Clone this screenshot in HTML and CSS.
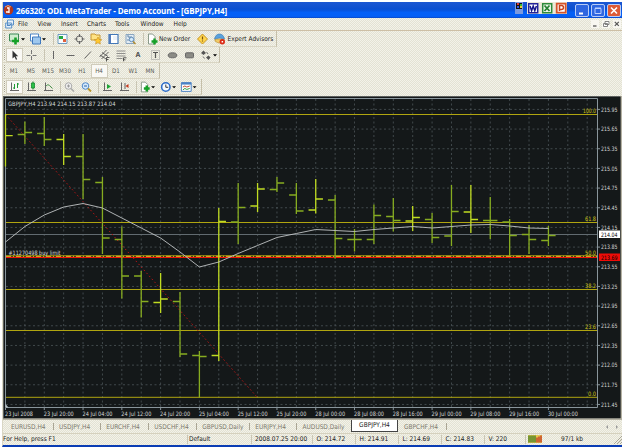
FILE: index.html
```html
<!DOCTYPE html>
<html lang="en">
<head>
    <meta charset="UTF-8">
    <meta name="viewport" content="width=device-width, initial-scale=1.0">
    <title>ODL MetaTrader</title>
    <link rel="stylesheet" href="styles.css">
</head>
<body>
    <div class="window">
        <div class="titlebar">
            <svg class="logo" width="11" height="12" viewBox="0 0 11 12"><circle cx="5.5" cy="6" r="4.8" fill="#b3361c"/><path d="M2 3q3-3 6 0" stroke="#f0a070" fill="none"/><path d="M4 4h2v5M3 8h3" stroke="#fff" stroke-width="1.3" fill="none"/></svg>
            <span class="title">266320: ODL MetaTrader - Demo Account - [GBPJPY,H4]</span>
            <div class="tray">
                <svg width="12" height="12" viewBox="0 0 12 12"><path fill="#7c9ade" d="M0 0h8v12H0z"/><path fill="#111" d="M1 1h6v6H1z"/><path fill="#d33" d="M2 1h2v2H2z"/><path fill="#3b3" d="M5 2h2v2H5z"/><path fill="#35d" d="M2 4h2v2H2z"/><path fill="#ec3" d="M5 4h2v2H5z"/></svg>
                <div class="office">
                    <svg width="12" height="12" viewBox="0 0 12 12"><path fill="#fff" stroke="#25259a" stroke-width="1.5" d="M1.7 1.7h9v9h-9z"/><path d="M3 4l1.6 4.7L6.2 4l1.6 4.7L9.4 4" stroke="#16168c" stroke-width="1.5" fill="none"/></svg>
                    <svg width="12" height="12" viewBox="0 0 12 12"><path fill="#eef8ea" stroke="#2d8a3a" stroke-width="1.5" d="M1.7 1.7h9v9h-9z"/><path d="M3.5 3.5l5 5.5m0-5.5l-5 5.5" stroke="#258032" stroke-width="1.8"/></svg>
                    <svg width="12" height="12" viewBox="0 0 12 12"><path fill="#fff" stroke="#d5532a" stroke-width="1.8" d="M1.7 1.7h9v9h-9z"/><path d="M4.5 9V3.5h2a1.7 1.7 0 010 4h-2" stroke="#c8421c" stroke-width="1.5" fill="none"/></svg>
                </div>
            </div>
            <div class="controls">
                <span class="control"><svg width="12" height="11"><path d="M3 8.5h4" stroke="#fff" stroke-width="2"/></svg></span>
                <span class="control"><svg width="12" height="11"><path d="M3 3.5h6v5H3zM3 3h6" stroke="#bcd0ff" fill="none"/></svg></span>
                <span class="control close"><svg width="12" height="11"><path d="M3 2.5l6 6m0-6l-6 6" stroke="#fff" stroke-width="1.6"/></svg></span>
            </div>
        </div>

        <div class="menubar">
            <svg class="menu-icon" width="9" height="10" viewBox="0 0 9 10"><path d="M2.5 1h6v5h-6zM.7 4h6v5h-6z" fill="#e8f2fb" stroke="#5b91c8"/><path d="M2 7l1-1 1 1 2-2" stroke="#3b78b8" fill="none" stroke-width=".8"/></svg>
            <span class="menu file">File</span>
            <span class="menu view">View</span>
            <span class="menu insert">Insert</span>
            <span class="menu charts">Charts</span>
            <span class="menu tools">Tools</span>
            <span class="menu win">Window</span>
            <span class="menu">Help</span>
            <div class="doc-controls">
                <span><svg width="8" height="8"><path d="M2 6h3.5" stroke="#555" stroke-width="1.3"/></svg></span>
                <span><svg width="8" height="8"><path d="M3 1.5h4v3H3zM1.5 3.5h4v3h-4z" stroke="#777" fill="#fff" stroke-width=".9"/></svg></span>
                <span><svg width="8" height="8"><path d="M1.8 1.8l4 4m0-4l-4 4" stroke="#555" stroke-width="1.2"/></svg></span>
            </div>
        </div>

        <div class="toolbar standard">
            <svg class="drop" viewBox="0 0 21 14"><path d="M3.5 2h9v7h-9z" fill="#cfeccf" stroke="#3d8a58"/><path d="M9.5 5.5v7M6 9h7" stroke="#16a028" stroke-width="2.6"/><path d="M15 6.2h4l-2 2.2z"/></svg>
            <svg class="drop" viewBox="0 0 21 14"><path d="M3.5 2h8v7h-8z" fill="#fff" stroke="#4f86c6"/><path d="M5.5 5h8v7h-8z" fill="#9fc8ee" stroke="#3f78bd"/><path d="M15 6.2h4l-2 2.2z"/></svg>
            <i class="sep wide"></i>
            <svg class="tool" viewBox="0 0 17 14"><path d="M4 2.5h9v9H4z" fill="#f8fbff" stroke="#6f9cc0"/><path d="M5 4h4v3H5z" fill="#25a840"/><path d="M9 7h3v3H9z" fill="#e0603c"/></svg>
            <svg class="tool" viewBox="0 0 17 14"><circle cx="8.5" cy="7" r="3.2" fill="none" stroke="#666"/><path d="M8.5 2v3m0 4v3M3.5 7h3m4 0h3" stroke="#666" stroke-width="1.2"/></svg>
            <svg class="tool" viewBox="0 0 17 14"><path d="M3 2h4l1 1h4v5H3z" fill="#ffe383" stroke="#c79835"/><path d="M10 5l1.2 2.4 2.6.3-1.9 1.8.5 2.6-2.4-1.3-2.4 1.3.5-2.6-1.9-1.8 2.6-.3z" fill="#ffc830" stroke="#c48d20" stroke-width=".6"/></svg>
            <svg class="tool" viewBox="0 0 17 14"><path d="M4 2.5h9v9H4z" fill="#fff" stroke="#4478b8" stroke-width="1.2"/><path d="M4 3h2v8H4z" fill="#557dbb"/><path d="M8 5h4M8 7h4" stroke="#dbe5f2"/></svg>
            <svg class="tool" viewBox="0 0 17 14"><path d="M4 2.5h8v9H4z" fill="#e2ecf5" stroke="#8aa6c0"/><path d="M5 4h2v2h2V4M5 8h4" stroke="#6688a8" fill="none"/><circle cx="9.5" cy="7.5" r="2.2" fill="#d4eafa" stroke="#638db8"/><path d="M11 9.5l2.5 2.5" stroke="#b08c30" stroke-width="1.5"/></svg>
            <i class="sep"></i>
            <svg class="tool order" viewBox="0 0 15.5 14"><path d="M4.5 2h4L11 4.5V12H4.5z" fill="#fff" stroke="#8a9a8a"/><path d="M10.5 6.5v6M7.5 9.5h6" stroke="#16a028" stroke-width="2.4"/></svg>
            <span class="label new-order">New Order</span>
            <svg class="tool" viewBox="0 0 17 14"><path d="M8.5 2l5 5-5 5-5-5z" fill="#ffd54c" stroke="#c79420"/><path d="M8.5 4.5v3m0 1v1" stroke="#7a5210" stroke-width="1.2"/></svg>
            <svg class="tool" viewBox="0 0 17 14"><path d="M4 7h9v2q-4.5 4-9 0z" fill="#f0cb68" stroke="#bb9030" stroke-width=".7"/><path d="M3.5 7q1-5 5-5t5 5q-5-2-10 0z" fill="#5ba2dc" stroke="#3879b5" stroke-width=".6"/><circle cx="11.3" cy="9.8" r="2.7" fill="#dc2c16"/><path d="M10.6 9h1.5v1.5h-1.5z" fill="#fff"/></svg>
            <span class="label experts">Expert Advisors</span>
        </div>

        <div class="toolbar drawing">
            <svg class="tool pressed" viewBox="0 0 17 14"><path d="M6.5 2.5v8l2-1.7 1.5 3 1.2-.6-1.5-2.9h2.5z" fill="#333"/></svg>
            <svg class="tool" viewBox="0 0 17 14"><path d="M8.5 2v4m0 2v4M3.5 7.5h4m2 0h4" stroke="#777"/></svg>
            <i class="sep"></i>
            <svg class="tool" viewBox="0 0 17 14"><path d="M8.5 3v8" stroke="#666"/></svg>
            <svg class="tool" viewBox="0 0 17 14"><path d="M4.5 7.5h8" stroke="#666"/></svg>
            <svg class="tool" viewBox="0 0 17 14"><path d="M5.5 10.5l6.500-7" stroke="#666"/></svg>
            <svg class="tool" viewBox="0 0 17 14"><path d="M3.5 9l7-7M5.5 11l7-7M4 7l6 4M6 4.5l6 4" stroke="#555" stroke-width=".9"/><path d="M10.5 9.5h3m-3 2h2m-2-2v4" stroke="#333" stroke-width=".8"/></svg>
            <svg class="tool" viewBox="0 0 17 14"><path d="M3.5 3h9M3.5 5.5h9M3.5 8h9M3.5 10.5h6" stroke="#777" stroke-width=".8"/><path d="M10.5 9.8h3m-3 2h2m-2-2v3.5" stroke="#333" stroke-width=".8"/></svg>
            <span class="tool letter">A</span>
            <svg class="tool" viewBox="0 0 17 14"><path d="M4.5 2.5h8v9h-8z" fill="none" stroke="#999" stroke-dasharray="1 1"/><path d="M6 4.5h5M8.5 4.5V10" stroke="#555" stroke-width="1.2"/></svg>
            <svg class="tool" viewBox="0 0 17 14"><ellipse cx="8.5" cy="7.3" rx="4.3" ry="2.5" fill="#8b8b85" stroke="#666"/></svg>
            <svg class="tool" viewBox="0 0 17 14"><rect x="4.5" y="4.8" width="8" height="5" rx="1" fill="#8b8b85" stroke="#666"/></svg>
            <svg class="drop" viewBox="0 0 21 14"><path d="M3 5l2.5-2.5L8 5 5.5 7zM8 9.5l2.5-2 2 2-2 2.500z" fill="#555"/><path d="M8.5 4l1.5 2m-5 2.5l1.5 2" stroke="#777"/><path d="M15 6.2h4l-2 2.200z"/></svg>
        </div>

        <div class="toolbar periods">
            <span class="period">M1</span>
            <span class="period">M5</span>
            <span class="period">M15</span>
            <span class="period">M30</span>
            <span class="period">H1</span>
            <span class="period pressed">H4</span>
            <span class="period">D1</span>
            <span class="period">W1</span>
            <span class="period">MN</span>
        </div>

        <div class="toolbar charting">
            <svg class="tool pressed" viewBox="0 0 17 14"><path d="M5.5 2.5V11M4 10.5h9" stroke="#666"/><path d="M8.5 4v5m0-1H7M11.5 3v5m0-4H13" stroke="#1f9a34"/></svg>
            <svg class="tool" viewBox="0 0 17 14"><path d="M5.5 2.5V11M4 10.5h9" stroke="#666"/><path d="M10 1.5v8" stroke="#147a28"/><path d="M8.5 3h3v5h-3z" fill="#2cc24a" stroke="#178a2e" stroke-width=".8"/></svg>
            <svg class="tool" viewBox="0 0 17 14"><path d="M5.5 2.5V11M4 10.5h9" stroke="#666"/><path d="M6 6q2-2.5 3.5-.5l3 3" stroke="#4a944e" fill="none"/></svg>
            <i class="sep s45"></i>
            <svg class="tool" viewBox="0 0 17 14"><circle cx="7.5" cy="6" r="3.3" fill="#eee" stroke="#aaa"/><path d="M6 6h3M7.5 4.5v3" stroke="#999"/><path d="M10 8.500l3 3" stroke="#aaa" stroke-width="1.6"/></svg>
            <svg class="tool" viewBox="0 0 17 14"><circle cx="7.5" cy="6" r="3.3" fill="#d5eafc" stroke="#4f88c9"/><path d="M6 6h3" stroke="#2b62a8"/><path d="M10 8.500l3 3" stroke="#b8962e" stroke-width="1.8"/></svg>
            <i class="sep s4"></i>
            <svg class="tool" viewBox="0 0 17 14"><path d="M5.5 2.5V11M4 10.5h9" stroke="#666"/><path d="M8 4l4 2.500L8 9z" fill="#1fa436"/></svg>
            <svg class="tool" viewBox="0 0 17 14"><path d="M5.5 2.5V11M4 10.5h9M9 3v6" stroke="#666"/><path d="M12.5 4v4l-3-2z" fill="#c8361c"/></svg>
            <i class="sep s4"></i>
            <svg class="drop" viewBox="0 0 21 14"><path d="M4.5 2h4L11 4.5V12H4.5z" fill="#fff" stroke="#8a9a8a"/><path d="M10 5.5v6M7 8.5h6" stroke="#16a028" stroke-width="2.5"/><path d="M14.5 6.2h4l-2 2.200z"/></svg>
            <svg class="drop" viewBox="0 0 21 14"><circle cx="8" cy="7" r="4.3" fill="#f4faff" stroke="#2c6cc8" stroke-width="1.6"/><path d="M8 4.5v2.800h2.500" stroke="#333" fill="none"/><path d="M14.5 6.2h4l-2 2.200z"/></svg>
            <svg class="drop" viewBox="0 0 21 14"><path d="M3.5 2.5h10v9h-10z" fill="#fff" stroke="#4b82c4"/><path d="M3.5 3.5h10" stroke="#4b82c4" stroke-width="2"/><path d="M5 7l2-1 2 1 3-1" stroke="#c04a2c" fill="none"/><path d="M5 10l2-1.500 2 1 3-1" stroke="#2a9a3c" fill="none"/><path d="M15 6.2h4l-2 2.200z"/></svg>
        </div>

        <div class="chart">
            <svg id="chart" width="619" height="324" viewBox="3 96 619 324"></svg>
        </div>

        <div class="tabs">
            <span class="tab t48">EURUSD,H4</span>
            <span class="tab t47">USDJPY,H4</span>
            <span class="tab t48">EURCHF,H4</span>
            <span class="tab t48">USDCHF,H4</span>
            <span class="tab t53">GBPUSD,Daily</span>
            <span class="tab t47">EURJPY,H4</span>
            <span class="tab t54 last">AUDUSD,Daily</span>
            <span class="tab active">GBPJPY,H4</span>
            <span class="tab t49">GBPCHF,H4</span>
            <svg class="scroll" width="16" height="8"><path d="M4 2v4L2 4zM12 2v4l2-2z" fill="#999"/></svg>
        </div>

        <div class="statusbar">
            <span class="cell help">For Help, press F1</span>
            <span class="cell profile">Default</span>
            <span class="cell time">2008.07.25 20:00</span>
            <span class="cell price">O: 214.72</span>
            <span class="cell price">H: 214.91</span>
            <span class="cell price">L: 214.69</span>
            <span class="cell price">C: 214.83</span>
            <span class="cell volume">V: 220</span>
            <svg class="signal" width="15" height="8" viewBox="0 0 15 8"><path fill="#e8c850" d="M0 0h14v8H0z"/><path d="M1 .5v7m2-7v7m2-7v7m2-7v7" stroke="#3b7a24" stroke-width="1.3"/><path d="M9 2.5v5m2-6v6m2-7v7" stroke="#c03022" stroke-width="1.3"/></svg>
            <span class="traffic">97/1 kb</span>
            <svg class="grip" width="9" height="9"><path d="M1 9l8-8M4 9l5-5M7 9l2-2" stroke="#aaa797"/></svg>
        </div>
    </div>
    <script src="chart.js"></script>
</body>
</html>
```
FILE: styles.css
```css
body {
    margin: 0;
    background-color: #fff;
    font-family: "DejaVu Sans Condensed", "DejaVu Sans", sans-serif;
    font-size: 6.5px;
    color: #222;
}
svg {
    display: block;
    flex: none;
}
.window {
    box-sizing: border-box;
    width: 620px;
    height: 445px;
    margin: 2px 3px 0 2px;
    border-left: 1px solid #d9d6c4;
    border-bottom: 2px solid #0a3cb4;
    background: repeating-conic-gradient(#f3f2e9 0 25%, #e3e2d3 0 50%) 0 0 / 2px 2px;
    display: flex;
    flex-direction: column;
    white-space: nowrap;
}
.titlebar {
    display: flex;
    align-items: center;
    height: 16px;
    background: linear-gradient(#1c57d2 0, #0b4fd0 45%, #0560f6 65%, #0560f6 90%, #0c48c4);
}
.logo {
    margin-right: 2px;
}
.title {
    font-family: "Open Sans", sans-serif;
    font-weight: bold;
    font-size: 8px;
    letter-spacing: -0.11px;
    color: #fff;
}
.tray {
    display: flex;
    align-self: flex-start;
    margin-left: auto;
    margin-right: 8px;
}
.office {
    display: flex;
    gap: 2px;
    background-color: #ece9d8;
}
.controls {
    display: flex;
    gap: 2px;
    margin-right: 1px;
}
.control {
    width: 12px;
    height: 11px;
    border: 0.5px solid #b9ccf6;
    border-radius: 2px;
    background-color: #2f66e0;
}
.close {
    background-color: #dd5a35;
}
.menubar {
    display: flex;
    align-items: center;
    box-sizing: border-box;
    height: 13px;
    padding-left: 2px;
    border-bottom: 1px solid #cdbfa5;
}
.menu-icon {
    margin-right: 4px;
}
.file { width: 19.5px; }
.view { width: 23.5px; }
.insert { width: 26px; }
.charts { width: 28px; }
.tools { width: 25.5px; }
.win { width: 33px; }
.doc-controls {
    display: flex;
    gap: 3px;
    margin: 0 1px 0 auto;
}
.doc-controls span {
    background-color: #f8f7f1;
}
.toolbar {
    box-sizing: border-box;
    display: flex;
    align-items: center;
    align-self: flex-start;
    height: 16px;
    padding-left: 2.5px;
    border-right: 1px solid #c5bfa9;
    border-bottom: 1px solid #d9d5c3;
}
.toolbar::before {
    content: "";
    width: 1px;
    height: 11px;
    margin: 0 -0.5px 0 -1.5px;
    border-left: 1px dotted #a8a38e;
}
.standard { width: 274px; }
.drawing { width: 217px; }
.periods { width: 157px; }
.charting { width: 199px; }
.tool {
    width: 17px;
    height: 14px;
}
.drop {
    width: 21px;
    height: 14px;
}
.charting .drop {
    width: 20.5px;
}
.order {
    width: 15.5px;
}
.letter {
    font-size: 7px;
    line-height: 14px;
    text-align: center;
    color: #555;
    font-weight: bold;
}
.pressed {
    background-color: #faf9f5;
    outline: 1px solid #d0ccbb;
    outline-offset: -1px;
}
.sep {
    box-sizing: border-box;
    width: 5px;
    height: 12px;
    border-right: 1px solid #c9c5b3;
}
.wide { width: 6px; }
.s45 { width: 4.5px; }
.s4 { width: 4px; }
.new-order { width: 34.5px; }
.period {
    width: 17px;
    line-height: 14px;
    text-align: center;
    font-size: 6.2px;
    color: #5c5c58;
}
.chart {
    height: 324px;
    margin-top: 1px;
    flex: none;
}
.grid { stroke: #4d5559; stroke-dasharray: 2 2.5; stroke-width: 0.8; }
.frame { stroke: #89959b; fill: none; }
.bar { fill: none; stroke: #86ac20; stroke-width: 1.3; }
.bar.light { stroke: #c0dc22; }
.fib { stroke: #b0a510; }
.fib-label { fill: #d2c614; }
.average { fill: none; stroke: #bfc3c4; stroke-width: 0.9; }
.trend { stroke: #b81414; stroke-dasharray: 1.5 2.5; }
.axis { fill: #d4d7d8; }
.tabs {
    box-sizing: border-box;
    display: flex;
    flex: none;
    align-items: center;
    height: 13px;
    padding-left: 8px;
    color: #7d7a6e;
    font-size: 6.5px;
}
.tab {
    box-sizing: border-box;
    flex: none;
    position: relative;
}
.tab:not(.last):not(.active)::after {
    content: "";
    position: absolute;
    right: 5.5px;
    top: 0;
    width: 1px;
    height: 7px;
    background-color: #aaa594;
}
.t47 { width: 47.3px; }
.t48 { width: 48px; }
.t49 { width: 49px; }
.t53 { width: 53px; }
.t54 { width: 48.4px; }
.active {
    align-self: flex-start;
    width: 47px;
    height: 12px;
    margin-right: 6px;
    border: 1px solid #444;
    border-top: none;
    background-color: #fff;
    color: #222;
    line-height: 11px;
    text-align: center;
}
.scroll {
    margin: 0 2px 0 auto;
}
.statusbar {
    display: flex;
    align-items: center;
    height: 10px;
    border-top: 1px solid #d5d1be;
}
.cell {
    box-sizing: border-box;
    height: 9px;
    line-height: 9px;
    border-right: 1px solid #cac6b4;
}
.help { width: 185px; }
.profile { width: 64px; padding-left: 1px; }
.time { width: 60.5px; padding-left: 3px; }
.price { width: 43px; padding-left: 4px; }
.volume { width: 41px; padding-left: 4px; }
.signal { margin-left: 2.5px; }
.traffic { margin-left: 18px; }
.grip {
    margin-left: auto;
    align-self: flex-end;
}
```
FILE: chart.js
```js
const svg = document.getElementById('chart');
const NS = 'http://www.w3.org/2000/svg';

function add(name, attrs, text) {
    const el = document.createElementNS(NS, name);
    for (const key in attrs) el.setAttribute(key, attrs[key]);
    if (text) el.textContent = text;
    svg.appendChild(el);
    return el;
}

function line(x1, y1, x2, y2, cls) {
    add('line', { x1, y1, x2, y2, class: cls });
}

function label(x, y, width, cls, text) {
    add('text', { x, y, class: cls, 'font-size': 6, textLength: width, lengthAdjust: 'spacingAndGlyphs' }, text);
}

const barX = i => 5.5 + i * 19.39;
const rowY = i => 109.4 + i * 19.67;

// high, low, open, close
const bars = [
    [114, 166.5, null, 135.7], [121.5, 144, 134.5, 132.5], [117, 146, 133.5, 139.5],
    [134, 165, 139.5, 156.5], [134, 199, 156.5, 179.5], [177, 254, 182.5, 238],
    [226.5, 298.5, 239.5, 276], [271, 317.5, 276, 301.5], [273, 313, 302.5, 299],
    [292, 357, 301.5, 354], [351, 397.5, 355.5, 356.5], [208, 361, 355.5, 221.5],
    [183, 244, 222, 207.5], [183, 212, 206, 189], [177, 192, 189.5, 183],
    [183, 214, 195, 211], [179, 213.5, 210, 199], [195, 258.5, 200, 238.5],
    [229, 251.5, 239.5, 239.5], [204.5, 244, 239.5, 215.5], [198, 231.5, 216.5, 220.5],
    [206, 231, 221, 217.5], [213, 243, 219.5, 237.5], [185, 246, 236, 211.5],
    [185, 233, 212, 219.5], [197, 239, 220.5, 220.5], [219, 256, 222, 235.5],
    [225, 254, 234.5, 239.5], [226, 246, 240.5, 235.5]
];
const lightBars = [0, 3, 8, 11, 13, 16, 21, 24];

const average = [242, 226.5, 215, 207, 203.5, 208, 218, 228, 238, 252, 267, 262, 253.5, 245.5,
    237.5, 233.5, 229.5, 230.5, 231.5, 229.5, 228, 226.5, 228, 226.5, 225, 224.5, 226, 228, 228.5];

const levels = [['100.0', 114.5, 13], ['61.8', 222.5, 11], ['50.0', 255.8, 11],
    ['38.2', 289.5, 11], ['23.6', 330.5, 11], ['0.0', 397.3, 8]];

const dates = ['23 Jul 2008', '23 Jul 20:00', '24 Jul 04:00', '24 Jul 12:00', '24 Jul 20:00',
    '25 Jul 04:00', '25 Jul 12:00', '25 Jul 20:00', '28 Jul 00:00', '28 Jul 08:00',
    '28 Jul 16:00', '29 Jul 00:00', '29 Jul 08:00', '29 Jul 16:00', '30 Jul 00:00'];

add('rect', { x: 3, y: 96, width: 619, height: 324, fill: '#b5b2a3' });
add('rect', { x: 3, y: 96, width: 617.5, height: 322.5, fill: '#5c5f5d' });
add('rect', { x: 4, y: 97, width: 616.5, height: 321, fill: '#141819' });

// grid
for (let i = 1; i <= 30; i++) line(barX(i), 99, barX(i), 407, 'grid');
for (let i = 0; i <= 15; i++) line(6, rowY(i), 597, rowY(i), 'grid');

add('path', { d: 'M5.5 407.5V98.5H597.5V407.5Z', class: 'frame' });

// retracement levels
for (const [name, y, width] of levels) {
    line(6, y, 597, y, 'fib');
    label(596 - width, y - 1.3, width, 'fib-label', name);
}
add('line', { x1: 6, y1: 234.5, x2: 597, y2: 234.5, stroke: '#626b70' });
add('line', { x1: 6, y1: 257.5, x2: 597, y2: 257.5, stroke: '#f01208' });
add('line', { x1: 6, y1: 256.4, x2: 597, y2: 256.4, stroke: '#e8b020', 'stroke-dasharray': '5 2 1 2' });
line(5.5, 114.5, 257, 397, 'trend');

bars.forEach(([high, low, open, close], i) => {
    const x = barX(i);
    let d = `M${x} ${high}V${low}M${x} ${close}h7.2`;
    if (open) d += `M${x - 7.2} ${open}h7.2`;
    add('path', { d, class: lightBars.includes(i) ? 'bar light' : 'bar' });
});
add('polyline', { points: average.map((y, i) => barX(i) + ',' + y).join(' '), class: 'average' });

label(8, 105.5, 107.5, 'axis', 'GBPJPY,H4  213.94 214.15 213.87 214.04');
label(8.5, 255, 52, 'axis', '#11270498 buy limit');

// price scale
for (let i = 0; i <= 15; i++) {
    add('line', { x1: 598, y1: rowY(i), x2: 600, y2: rowY(i), stroke: '#89959b' });
    label(601, rowY(i) + 2.1, 16.5, 'axis', (215.95 - i * 0.3).toFixed(2));
}
add('rect', { x: 599, y: 230.5, width: 21, height: 7.5, fill: '#fff' });
label(601, 236.5, 16.5, 'current', '214.04');
add('rect', { x: 599, y: 253.5, width: 21, height: 7.5, fill: '#f00c08' });
label(601, 259.5, 16.5, 'order-price', '213.69');

// time scale
dates.forEach((text, i) => {
    const x = barX(i * 2);
    add('line', { x1: x, y1: 408, x2: x, y2: 410, stroke: '#89959b' });
    label(x - 0.5, 415.5, i ? 30 : 28, 'axis', text);
});
add('path', { d: 'M5.5 404l3 3.5h-3z', fill: '#b9c2c6' });
```
